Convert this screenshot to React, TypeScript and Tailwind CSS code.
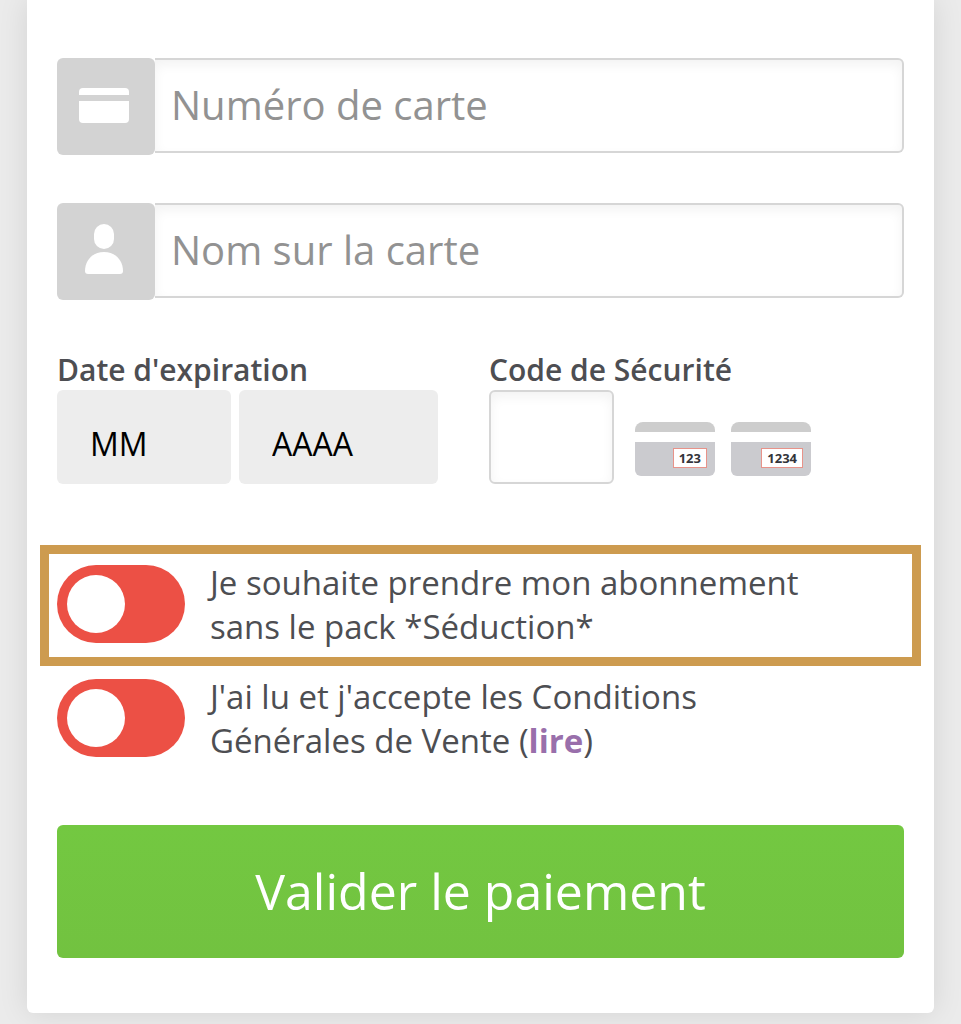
import { useState, type ReactNode } from "react";

interface IconFieldProps {
  id: string;
  label: string;
  autoComplete: string;
  icon: ReactNode;
}

function IconField({ id, label, autoComplete, icon }: IconFieldProps) {
  return (
    <div className="flex items-start">
      <label
        htmlFor={id}
        aria-label={label}
        className="flex h-[97px] w-[98px] shrink-0 items-center justify-center rounded-md bg-[#d3d3d3] pr-1 pb-1 text-white"
      >
        {icon}
      </label>
      <input
        id={id}
        type="text"
        autoComplete={autoComplete}
        placeholder={label}
        className="h-[95px] min-w-0 flex-1 rounded-r-md border-2 border-l-0 border-[#d6d6d6] bg-white px-4 pb-[2px] text-[40px] text-[#4d4e52] shadow-[inset_0_5px_12px_rgba(0,0,0,0.05)] outline-none placeholder:text-[#929292]"
      />
    </div>
  );
}

function CardIcon() {
  return (
    <svg className="h-[36px] w-[52px]" viewBox="0 0 52 36" fill="currentColor" aria-hidden="true">
      <path d="M1 8V5q0-4 4-4h42q4 0 4 4v3z" />
      <path d="M1 14h50v18q0 4-4 4H5q-4 0-4-4z" />
    </svg>
  );
}

function PersonIcon() {
  return (
    <svg className="h-[51px] w-[38px]" viewBox="0 0 38 51" fill="currentColor" aria-hidden="true">
      <rect x="9" y="0" width="20" height="25" rx="10" />
      <path d="M0 47C0 36 8 28 19 28s19 8 19 19q0 3-3 3H3q-3 0-3-3z" />
    </svg>
  );
}

function CvvCard({ digits }: { digits: string }) {
  return (
    <div className="flex w-20 flex-col gap-[10px]" aria-hidden="true">
      <div className="h-[10px] rounded-t-lg bg-[#cdcdcd]" />
      <div className="flex h-[34px] items-start justify-end rounded-b-md bg-[#cbcbcf] pt-[6px] pr-2">
        <span className="border border-[#e8938a] bg-white px-[5px] text-[13px] leading-[18px] font-bold text-[#33343a]">
          {digits}
        </span>
      </div>
    </div>
  );
}

interface ToggleRowProps {
  id: string;
  children: ReactNode;
}

function ToggleRow({ id, children }: ToggleRowProps) {
  const [checked, setChecked] = useState(false);

  return (
    <div className="flex items-start gap-[25px]">
      <input
        id={id}
        type="checkbox"
        checked={checked}
        onChange={() => setChecked(!checked)}
        className="mt-1 flex h-[78px] w-32 shrink-0 cursor-pointer appearance-none items-center rounded-full bg-[#ec5045] px-[10px] before:block before:size-[58px] before:rounded-full before:bg-white checked:justify-end checked:bg-[#72c640]"
      />
      <label htmlFor={id} className="max-w-[600px] text-[33px] leading-[44px]">
        {children}
      </label>
    </div>
  );
}

export default function App() {
  return (
    <div className="min-h-screen overflow-hidden bg-[#ebebeb] px-[27px] pb-[11px] font-['Open_Sans',sans-serif] text-[#4d4e52]">
      <form
        onSubmit={(e) => e.preventDefault()}
        className="rounded-b-md bg-white px-[30px] pt-[58px] pb-[55px] shadow-[0_0_30px_rgba(0,0,0,0.1)]"
      >
        <div className="flex flex-col gap-12">
          <IconField id="card-number" label="Numéro de carte" autoComplete="cc-number" icon={<CardIcon />} />
          <IconField id="card-name" label="Nom sur la carte" autoComplete="cc-name" icon={<PersonIcon />} />
        </div>

        <div className="mt-[50px] flex flex-wrap gap-x-[51px] gap-y-6">
          <fieldset>
            <legend className="text-[30px] leading-10 font-semibold">Date d'expiration</legend>
            <div className="flex gap-2">
              <select
                aria-label="Mois"
                className="h-[94px] w-[174px] appearance-none rounded-md bg-[#ededed] px-[33px] pt-[14px] text-[32px] text-black"
              >
                <option>MM</option>
              </select>
              <select
                aria-label="Année"
                className="h-[94px] w-[199px] appearance-none rounded-md bg-[#ededed] px-[33px] pt-[14px] text-[32px] text-black"
              >
                <option>AAAA</option>
              </select>
            </div>
          </fieldset>

          <div>
            <label htmlFor="cvv" className="block text-[30px] leading-10 font-semibold">
              Code de Sécurité
            </label>
            <div className="flex items-end">
              <input
                id="cvv"
                type="text"
                maxLength={4}
                autoComplete="cc-csc"
                className="h-[94px] w-[125px] rounded-md border-2 border-[#d6d6d6] bg-white px-4 text-[32px] shadow-[inset_0_5px_12px_rgba(0,0,0,0.05)] outline-none"
              />
              <div className="ml-[21px] flex gap-4 pb-2">
                <CvvCard digits="123" />
                <CvvCard digits="1234" />
              </div>
            </div>
          </div>
        </div>

        <div className="-mx-[17px] mt-[61px] border-[9px] border-[#cd9b4f] px-2 pt-[7px] pb-2">
          <ToggleRow id="no-pack">Je souhaite prendre mon abonnement sans le pack *Séduction*</ToggleRow>
        </div>
        <div className="mt-[9px]">
          <ToggleRow id="terms">
            J'ai lu et j'accepte les Conditions Générales de Vente (
            <a href="#cgv" className="font-bold text-[#996fab]">
              lire
            </a>
            )
          </ToggleRow>
        </div>

        <button
          type="submit"
          className="mt-[62px] h-[133px] w-full cursor-pointer rounded-md bg-linear-to-b from-[#73c841] to-[#72c240] text-[50px] text-white"
        >
          Valider le paiement
        </button>
      </form>
    </div>
  );
}
